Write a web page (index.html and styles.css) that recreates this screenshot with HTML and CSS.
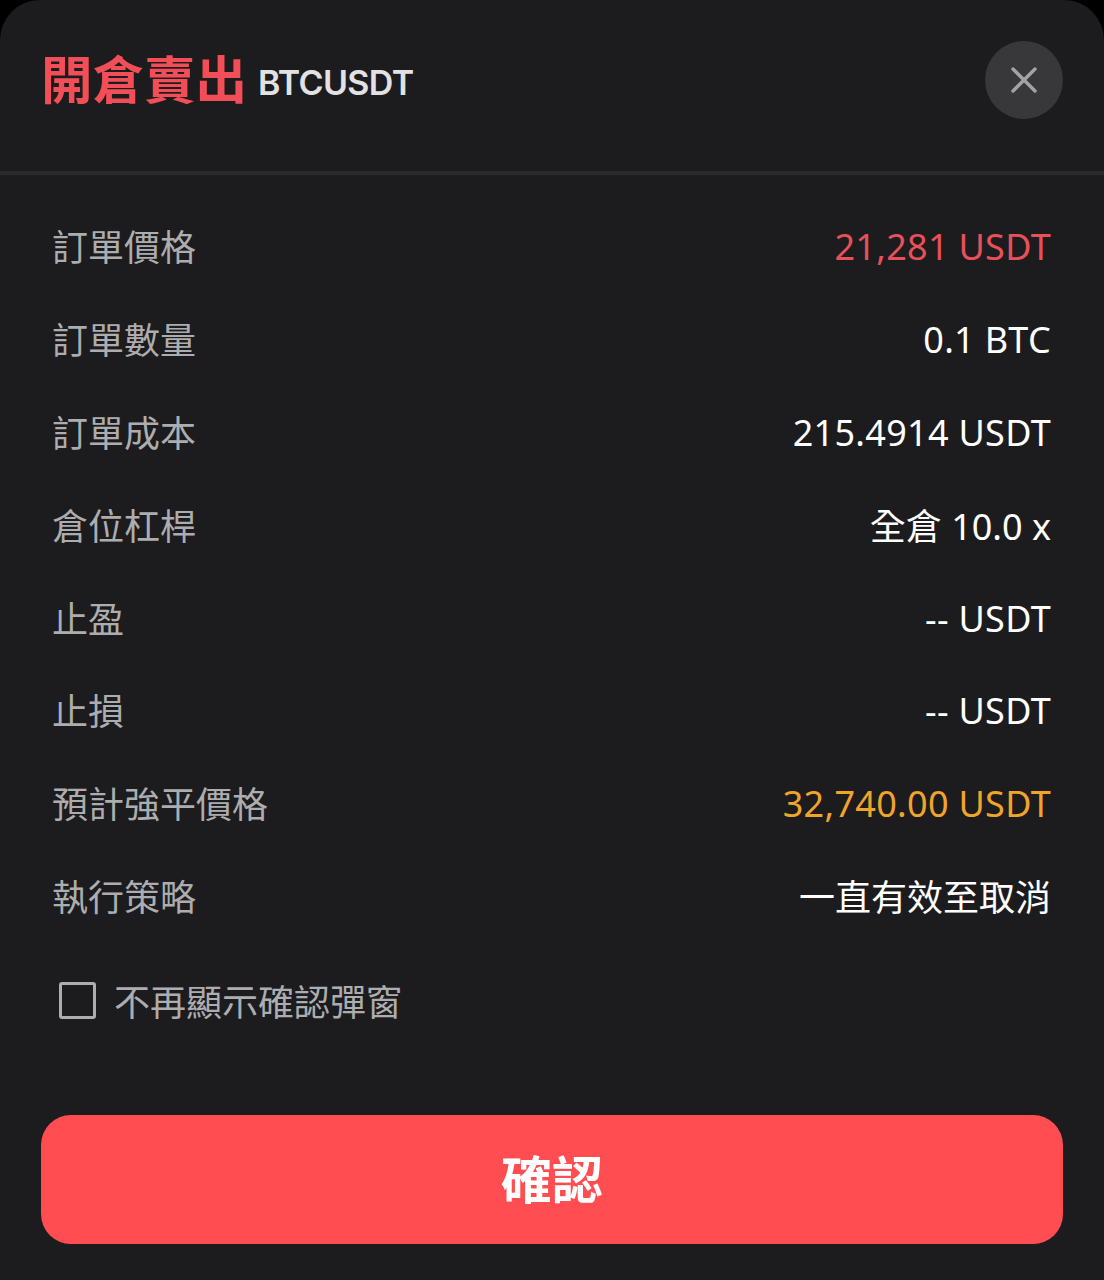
FILE: index.html
```html
<!DOCTYPE html>
<html lang="zh-Hant">
<head>
    <meta charset="UTF-8">
    <meta name="viewport" content="width=device-width, initial-scale=1.0">
    <title>開倉賣出</title>
    <link rel="stylesheet" href="styles.css">
</head>
<body>
    <div class="sheet">
        <div class="sheet-header">
            <div class="title">
                <span class="title-side">開倉賣出</span>
                <span class="title-symbol">BTCUSDT</span>
            </div>
            <div class="close-btn">
                <svg width="26" height="26" viewBox="0 0 26 26">
                    <path d="M2 2L24 24M24 2L2 24" stroke="#a3a3a3" stroke-width="3.4" stroke-linecap="round" fill="none"/>
                </svg>
            </div>
        </div>

        <div class="rows">
            <div class="row"><span class="label">訂單價格</span><span class="value red">21,281 USDT</span></div>
            <div class="row"><span class="label">訂單數量</span><span class="value">0.1 BTC</span></div>
            <div class="row"><span class="label">訂單成本</span><span class="value">215.4914 USDT</span></div>
            <div class="row"><span class="label">倉位杠桿</span><span class="value value-cjk">全倉 10.0 x</span></div>
            <div class="row"><span class="label">止盈</span><span class="value">-- USDT</span></div>
            <div class="row"><span class="label">止損</span><span class="value">-- USDT</span></div>
            <div class="row"><span class="label">預計強平價格</span><span class="value orange">32,740.00 USDT</span></div>
            <div class="row"><span class="label">執行策略</span><span class="value value-cjk">一直有效至取消</span></div>
        </div>

        <div class="no-show">
            <span class="checkbox"></span>
            <span class="no-show-text">不再顯示確認彈窗</span>
        </div>

        <div class="confirm-btn">確認</div>
    </div>
</body>
</html>
```

FILE: styles.css
```css
html, body {
    margin: 0;
    padding: 0;
    background-color: #000;
}

body {
    font-family: "Noto Sans", "Noto Sans CJK TC", sans-serif;
    width: 1104px;
    height: 1280px;
    overflow: hidden;
}

.sheet {
    height: 1280px;
    box-sizing: border-box;
    background-color: #1c1c1e;
    border-radius: 40px 40px 0 0;
}

.sheet-header {
    height: 175px;
    box-sizing: border-box;
    padding: 41px 41px 0 41px;
    display: flex;
    justify-content: space-between;
    align-items: flex-start;
    border-bottom: 4px solid #2a2a2c;
}

.title {
    display: flex;
    align-items: center;
    height: 78px;
}

.title-side {
    font-size: 51.5px;
    font-weight: 700;
    color: #f24e58;
    padding-bottom: 7px;
}

.title-symbol {
    font-family: "Inter", "Noto Sans", sans-serif;
    font-size: 34px;
    font-weight: 600;
    color: #e2e2e4;
    margin-left: 11px;
    padding-top: 4px;
    letter-spacing: -0.65px;
}

.close-btn {
    width: 78px;
    height: 78px;
    border-radius: 50%;
    background-color: #38383a;
    display: flex;
    justify-content: center;
    align-items: center;
}

.rows {
    padding: 24px 53px 0 52px;
}

.row {
    height: 92.9px;
    display: flex;
    justify-content: space-between;
    align-items: center;
    font-size: 36px;
}

.label {
    color: #adadaf;
}

.value {
    color: #fff;
    letter-spacing: 0.3px;
    padding-top: 2px;
}

.value-cjk {
    letter-spacing: 0;
    padding-top: 0;
}

.red {
    color: #e8505a;
}

.orange {
    color: #f0a52a;
}

.no-show {
    display: flex;
    align-items: center;
    margin: 28px 0 0 59px;
    height: 60px;
}

.checkbox {
    width: 37px;
    height: 37px;
    box-sizing: border-box;
    border: 3px solid #adadaf;
    border-radius: 3px;
}

.no-show-text {
    margin-left: 18px;
    font-size: 36px;
    color: #adadaf;
}

.confirm-btn {
    margin: 85px 41px 0;
    height: 129px;
    box-sizing: border-box;
    padding-bottom: 6px;
    border-radius: 30px;
    background-color: #ff4d52;
    color: #fff;
    font-size: 51px;
    font-weight: 700;
    display: flex;
    justify-content: center;
    align-items: center;
}
```
